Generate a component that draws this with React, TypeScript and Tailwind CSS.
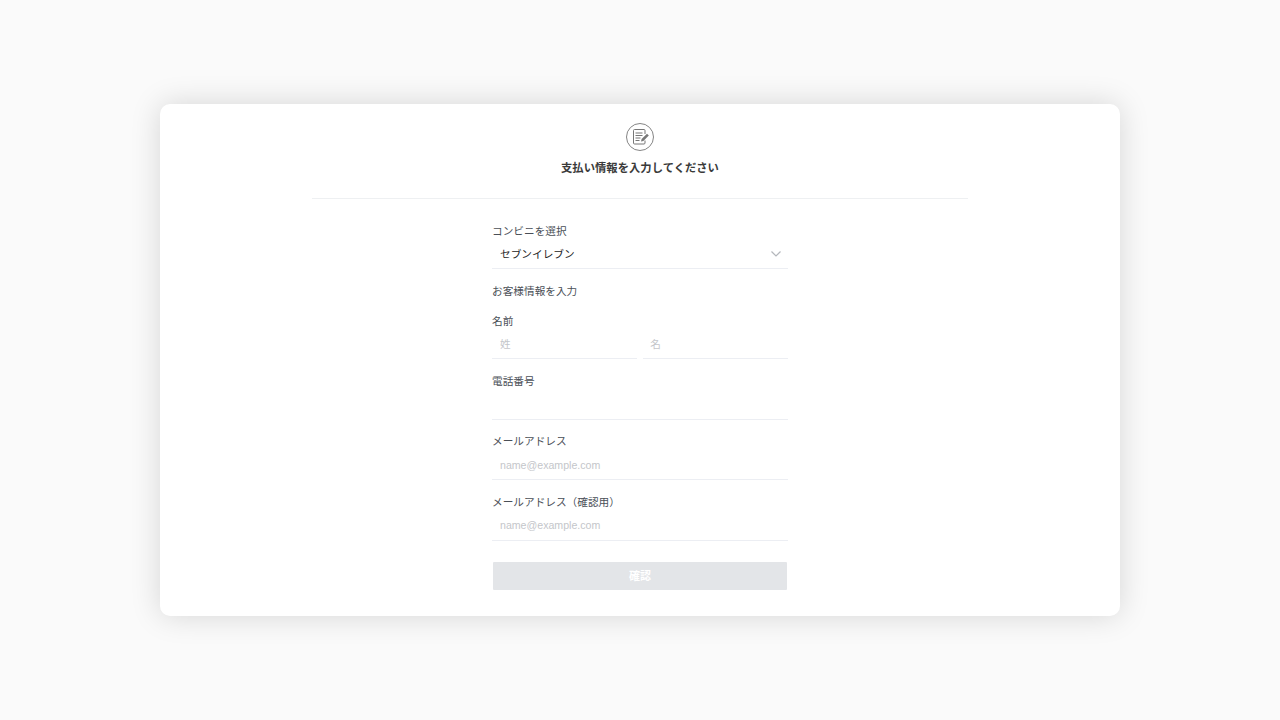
import React from "react";

const Input = ({ placeholder, className = "" }: { placeholder?: string; className?: string }) => (
  <input
    readOnly
    placeholder={placeholder}
    className={`block h-[29px] w-full border-b border-[#eceef3] bg-white pl-2 pr-2 text-[10.6px] outline-none placeholder:text-[#c4c6ca] ${className}`}
  />
);

const Label = ({ children }: { children: React.ReactNode }) => (
  <div className="h-[18px] text-[10.67px] leading-[16px] text-[#4a4f57]">{children}</div>
);

export default function App() {
  return (
    <div
      className="flex h-[720px] w-full items-center justify-center bg-[#fafafa]"
      style={{ fontFamily: '"Liberation Sans", "Noto Sans CJK JP", sans-serif' }}
    >
      <div className="flex h-[512px] w-[960px] flex-col items-center rounded-[10px] bg-white pt-[18px] shadow-[0_0_30px_rgba(0,0,0,0.15)]">
        <svg width="30" height="30" viewBox="0 0 30 30" fill="none">
          <circle cx="15" cy="15" r="13.500" stroke="#858585" strokeWidth="1" />
          <path d="M20 12V8.500A1 1 0 0 0 19 7.500H9.500a1 1 0 0 0-1 1V21a1 1 0 0 0 1 1H19a1 1 0 0 0 1-1V18.500" stroke="#777" strokeWidth="1" />
          <path d="M10.500 11h7M10.500 13.500h7M10.500 16h5M10.500 18.500h4" stroke="#777" strokeWidth="1" />
          <path d="M16 19.500l.6-2.400 5.400-5.400 1.800 1.800-5.400 5.400z" fill="#777" />
        </svg>
        <h1 className="mt-[7px] h-[18px] text-[11.33px] font-bold leading-[18px] text-[#3a3a3a]">支払い情報を入力してください</h1>
        <div className="mt-[21px] h-px w-[656px] bg-[#eef0f2]" />
        <form className="mt-[24px] flex w-[296px] flex-col">
          <Label>コンビニを選択</Label>
          <div className="flex h-[28px] items-center justify-between border-b border-[#eceef3] pb-[2px] pl-2 pr-[7px]">
            <span className="text-[10.67px] text-[#222]">セブンイレブン</span>
            <svg width="10" height="6" viewBox="0 0 10 6" fill="none">
              <path d="M.5.500 5 5 9.500.500" stroke="#b4b7bc" strokeWidth="1.200" />
            </svg>
          </div>
          <div className="mt-[14px]"><Label>お客様情報を入力</Label></div>
          <div className="mt-[12px]"><Label>名前</Label></div>
          <div className="flex gap-[6px]">
            <Input placeholder="姓" className="!h-[28px] pb-[2px]" />
            <Input placeholder="名" className="!h-[28px] !pl-[7px] pb-[2px]" />
          </div>
          <div className="mt-[14px]"><Label>電話番号</Label></div>
          <Input />
          <div className="mt-[13px]"><Label>メールアドレス</Label></div>
          <Input placeholder="name@example.com" />
          <div className="mt-[14px]"><Label>メールアドレス（確認用）</Label></div>
          <Input placeholder="name@example.com" className="pb-[2px]" />
          <button type="button" className="mt-[21px] h-[28px] w-[294px] self-center rounded-[1px] bg-[#e3e5e8] text-[11px] font-bold text-white">確認</button>
        </form>
      </div>
    </div>
  );
}
